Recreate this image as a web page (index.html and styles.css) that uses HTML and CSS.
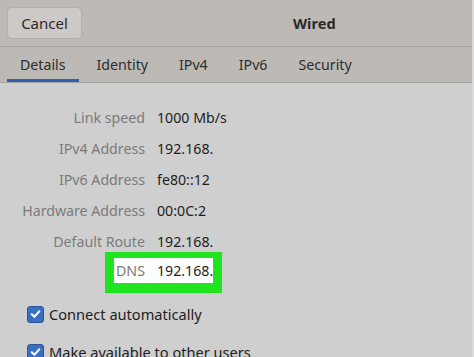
FILE: index.html
```html
<!DOCTYPE html>
<html>
<head>
<meta charset="utf-8">
<link rel="stylesheet" href="styles.css">
</head>
<body>
<div class="window">
  <header class="headerbar">
    <button class="btn">Cancel</button>
    <div class="title">Wired</div>
  </header>
  <nav class="tabs">
    <div class="tab active">Details</div>
    <div class="tab">Identity</div>
    <div class="tab">IPv4</div>
    <div class="tab">IPv6</div>
    <div class="tab">Security</div>
  </nav>
  <main class="content">
    <div class="grid">
      <div class="label">Link speed</div><div class="value">1000 Mb/s</div>
      <div class="label">IPv4 Address</div><div class="value">192.168.</div>
      <div class="label">IPv6 Address</div><div class="value">fe80::12</div>
      <div class="label">Hardware Address</div><div class="value">00:0C:2</div>
      <div class="label">Default Route</div><div class="value">192.168.</div>
      <div class="hl-row">
        <div class="hl">
          <span class="label">DNS</span><span class="value">192.168.</span>
        </div>
      </div>
    </div>
    <div class="checks">
      <label class="check"><span class="box"><svg viewBox="0 0 16 16" width="16" height="16"><path d="M4 8.3 L6.8 11 L12 5.2" fill="none" stroke="#fff" stroke-width="2.2" stroke-linecap="round" stroke-linejoin="round"/></svg></span>Connect automatically</label>
      <label class="check"><span class="box"><svg viewBox="0 0 16 16" width="16" height="16"><path d="M4 8.3 L6.8 11 L12 5.2" fill="none" stroke="#fff" stroke-width="2.2" stroke-linecap="round" stroke-linejoin="round"/></svg></span>Make available to other users</label>
    </div>
  </main>
</div>
</body>
</html>
```
FILE: styles.css
```css
* { box-sizing: border-box; }
html, body { margin: 0; padding: 0; }
body {
  width: 474px;
  height: 357px;
  overflow: hidden;
  font-family: "Noto Sans", "Open Sans", sans-serif;
  font-size: 14.2px;
  background: #cfcfcf;
}
.window { width: 474px; height: 357px; display: flex; flex-direction: column; border-right: 2px solid #dcdcdc; }
.headerbar {
  height: 47px;
  flex: none;
  background: #bdb9b5;
  border-bottom: 1px solid #a8a5a1;
  display: flex;
  align-items: center;
  padding: 0 0 0 7px;
}
.btn {
  width: 75px;
  height: 32px;
  background: #cdc9c6;
  border: 1px solid #b3afab;
  border-radius: 5px;
  font: inherit;
  font-size: 15px;
  color: #2b2b2b;
  padding: 0;
}
.title {
  margin-left: 211px;
  font-weight: bold;
  font-size: 14.6px;
  color: #2a2a2a;
}
.tabs {
  height: 36px;
  flex: none;
  background: #bdb9b5;
  border-bottom: 1px solid #a6a6a6;
  display: flex;
  padding-left: 7px;
}
.tab {
  padding: 2px 13px 0;
  display: flex;
  align-items: center;
  color: #2e2e2e;
  margin-right: 5px;
  border-bottom: 3px solid transparent;
  font-size: 14.2px;
}
.tab.active { border-bottom-color: #2f5fb0; }
.content { flex: 1; padding-top: 19px; min-height: 0; }
.grid {
  display: grid;
  grid-template-columns: 145px auto;
  column-gap: 12px;
  row-gap: 0;
  grid-auto-rows: 31px;
  align-items: center;
}
.label { text-align: right; color: #7b7b7b; }
.value { color: #1e1e1e; }
.hl-row { grid-column: 1 / span 2; display: flex; }
.hl {
  margin-left: 105px;
  display: flex;
  align-items: center;
  background: #fff;
  border-style: solid;
  border-color: #1fe41f;
  border-width: 6px 9px 10px 9px;
  height: 41px;
  padding-left: 2px;
  padding-right: 0;
}
.hl .value { margin-left: 12px; }
.checks { margin-top: 16px; padding-left: 27px; display: flex; flex-direction: column; gap: 18px; }
.check { display: flex; align-items: center; color: #1e1e1e; font-size: 14.6px; }
.box {
  width: 17px; height: 17px;
  background: #3a6fbf;
  border: 1px solid #2b569b;
  border-radius: 3px;
  margin-right: 5px;
  display: flex; align-items: center; justify-content: center;
}
.box svg { display: block; }
```
